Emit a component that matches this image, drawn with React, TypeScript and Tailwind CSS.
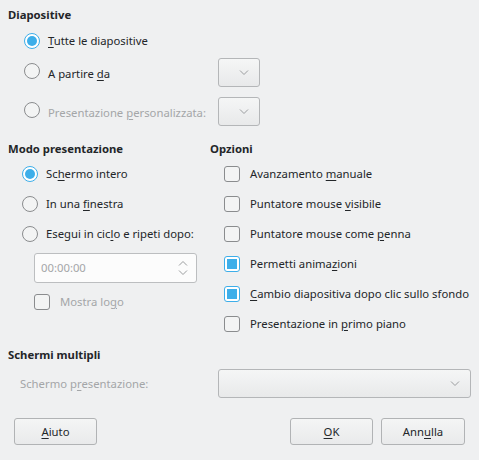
import type { ReactNode } from "react"

const font = { fontFamily: '"Noto Sans", "DejaVu Sans", sans-serif' }

function Radio({ checked }: { checked?: boolean }) {
  return checked ? (
    <span className="w-4 h-4 rounded-full border border-[#3daee9] bg-white flex items-center justify-center flex-shrink-0">
      <span className="w-[10px] h-[10px] rounded-full bg-[#3daee9]" />
    </span>
  ) : (
    <span className="w-4 h-4 rounded-full border border-[#8a8c8e] bg-[#f3f4f4] flex-shrink-0" />
  )
}

function Check({ checked }: { checked?: boolean }) {
  return checked ? (
    <span className="w-4 h-4 rounded-[3px] border border-[#3daee9] bg-white flex items-center justify-center flex-shrink-0">
      <span className="w-[10px] h-[10px] bg-[#3daee9]" />
    </span>
  ) : (
    <span className="w-4 h-4 rounded-[3px] border border-[#8a8c8e] bg-[#f3f4f4] flex-shrink-0" />
  )
}

function Chevron({ up }: { up?: boolean }) {
  return (
    <svg width="10" height="6" viewBox="0 0 10 6" className="flex-shrink-0">
      <path d={up ? "M1 5.5 L5 1.5 L9 5.5" : "M1 0.5 L5 4.5 L9 0.5"} fill="none" stroke="#9a9c9e" strokeWidth="1" />
    </svg>
  )
}

function Combo({ className }: { className: string }) {
  return (
    <div className={`h-[29px] rounded-[3px] border border-[#b4b6b8] bg-gradient-to-b from-[#f5f6f6] to-[#e8e9ea] flex items-center justify-end pr-[10px] flex-shrink-0 ${className}`}>
      <Chevron />
    </div>
  )
}

function Button({ children, className }: { children: ReactNode; className: string }) {
  return (
    <button className={`h-[27px] rounded-[3px] border border-[#b1b3b5] bg-gradient-to-b from-[#f4f5f5] to-[#e9eaeb] text-[#232629] ${className}`}>
      {children}
    </button>
  )
}

const u = (s: string) => <u className="underline underline-offset-2">{s}</u>

export default function App() {
  return (
    <div style={font} className="w-[479px] h-[460px] bg-[#eff0f1] text-[11.3px] text-[#232629] flex flex-col px-2 pt-[6px] leading-[18px]">
      <div className="font-bold h-[18px]">Diapositive</div>

      <div className="flex flex-col pl-[16px]">
        <div className="flex items-center gap-[8px] h-[26px] mt-[4px]">
          <Radio checked />
          <span>{u("T")}utte le diapositive</span>
        </div>
        <div className="flex items-center h-[29px] mt-[4px]">
          <div className="flex items-center gap-[8px] w-[194px] -mt-[4px]">
            <Radio />
            <span className="mt-[6px]">A partire {u("d")}a</span>
          </div>
          <Combo className="w-[42px]" />
        </div>
        <div className="flex items-center h-[29px] mt-[10px]">
          <div className="flex items-center gap-[8px] w-[194px] -mt-[4px]">
            <Radio />
            <span className="mt-[6px] text-[#a4a6a8]">Presentazione {u("p")}ersonalizzata:</span>
          </div>
          <Combo className="w-[42px]" />
        </div>
      </div>

      <div className="flex mt-[14px]">
        <div className="w-[202px] flex-shrink-0 flex flex-col">
          <div className="font-bold h-[18px]">Modo presentazione</div>
          <div className="flex flex-col pl-[14px]">
            <div className="flex items-center gap-[8px] h-[30px] mt-[1px]">
              <Radio checked />
              <span>Sc{u("h")}ermo intero</span>
            </div>
            <div className="flex items-center gap-[8px] h-[30px]">
              <Radio />
              <span>In una {u("f")}inestra</span>
            </div>
            <div className="flex items-center gap-[8px] h-[30px]">
              <Radio />
              <span>Esegui in cic{u("l")}o e ripeti dopo:</span>
            </div>
            <div className="ml-[12px] mt-[4px] w-[163px] h-[30px] rounded-[3px] border border-[#bcbec0] bg-[#fcfcfc] flex items-center justify-between pl-[6px] pr-[8px]">
              <span className="text-[#a4a6a8]">00:00:00</span>
              <div className="flex flex-col gap-[4px]">
                <Chevron up />
                <Chevron />
              </div>
            </div>
            <div className="flex items-center gap-[10px] h-[18px] mt-[10px] ml-[12px]">
              <Check />
              <span className="text-[#a4a6a8]">Mostra lo{u("g")}o</span>
            </div>
          </div>
        </div>

        <div className="flex flex-col">
          <div className="font-bold h-[18px]">Opzioni</div>
          <div className="flex flex-col pl-[14px] mt-[1px]">
            {[
              [false, <>Avanzamento {u("m")}anuale</>],
              [false, <>Puntatore mouse {u("v")}isibile</>],
              [false, <>Puntatore mouse come {u("p")}enna</>],
              [true, <>Permetti anima{u("z")}ioni</>],
              [true, <>{u("C")}ambio diapositiva dopo clic sullo sfondo</>],
              [false, <>Presentazione in {u("p")}rimo piano</>],
            ].map(([c, label], i) => (
              <div key={i} className="flex items-center gap-[10px] h-[30px] whitespace-nowrap">
                <Check checked={c as boolean} />
                <span>{label as ReactNode}</span>
              </div>
            ))}
          </div>
        </div>
      </div>

      <div className="font-bold h-[18px] mt-[7px]">Schermi multipli</div>
      <div className="flex items-center h-[29px] mt-[5px]">
        <span className="w-[210px] pl-[12px] text-[#a4a6a8]">Schermo p{u("r")}esentazione:</span>
        <Combo className="w-[253px]" />
      </div>

      <div className="flex items-center mt-[20px] px-[6px]">
        <Button className="w-[83px]">{u("A")}iuto</Button>
        <div className="flex-1" />
        <Button className="w-[83px]">{u("O")}K</Button>
        <Button className="w-[84px] ml-[8px]">Ann{u("u")}lla</Button>
      </div>
    </div>
  )
}
